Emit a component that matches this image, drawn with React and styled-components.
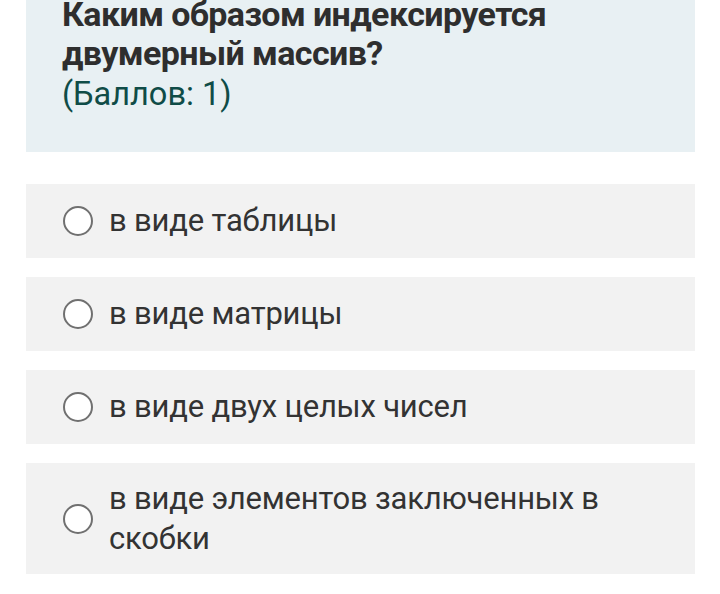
import styled, { createGlobalStyle } from "styled-components";

const GlobalStyle = createGlobalStyle`
  html, body {
    margin: 0;
    padding: 0;
    background: #fff;
    font-family: Roboto, "Noto Sans", sans-serif;
    overflow: hidden;
  }
`;

const options = [
  "в виде таблицы",
  "в виде матрицы",
  "в виде двух целых чисел",
  "в виде элементов заключенных в скобки",
];

function App() {
  return (
    <Page>
      <GlobalStyle />
      <Question>
        <Title>Каким образом индексируется двумерный массив?</Title>
        <Points>(Баллов: 1)</Points>
      </Question>
      <OptionList>
        {options.map((text) => (
          <Option key={text}>
            <Radio />
            <OptionText>{text}</OptionText>
          </Option>
        ))}
      </OptionList>
    </Page>
  );
}

export default App;

const Page = styled.div`
  width: 669px;
  margin: -29px 0 0 26px;
`;

const Question = styled.div`
  background: #e8f0f3;
  padding: 24px 36px 37px 36px;
`;

const Title = styled.div`
  font-size: 34px;
  font-weight: 700;
  line-height: 39px;
  letter-spacing: -0.6px;
  color: #2e2e2e;
`;

const Points = styled.div`
  font-size: 32.5px;
  line-height: 42px;
  color: #0f4c47;
`;

const OptionList = styled.div`
  display: flex;
  flex-direction: column;
  gap: 19px;
  margin-top: 32px;
`;

const Option = styled.label`
  display: flex;
  align-items: center;
  gap: 16px;
  min-height: 74px;
  padding: 15.5px 20px 15.5px 37px;
  box-sizing: border-box;
  background: #f2f2f2;
`;

const Radio = styled.span`
  flex: none;
  width: 26px;
  height: 26px;
  border: 2px solid #707070;
  border-radius: 50%;
  background: #fff;
`;

const OptionText = styled.span`
  font-size: 31px;
  line-height: 40px;
  letter-spacing: -0.2px;
  color: #333;
`;
